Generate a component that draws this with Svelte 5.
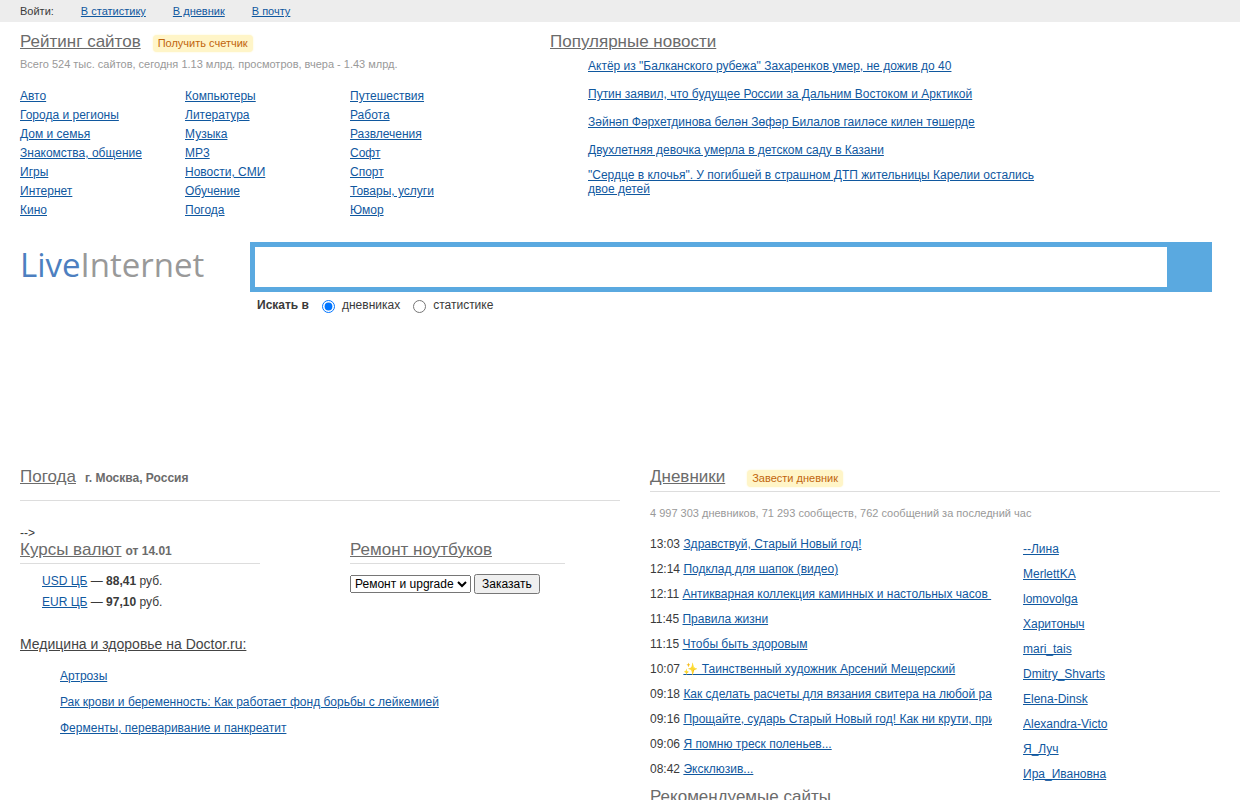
<script>
	let query = $state('');
	let area = $state('diary');

	const logins = ['В статистику', 'В дневник', 'В почту'];

	const categories = [
		['Авто', 'Города и регионы', 'Дом и семья', 'Знакомства, общение', 'Игры', 'Интернет', 'Кино'],
		['Компьютеры', 'Литература', 'Музыка', 'MP3', 'Новости, СМИ', 'Обучение', 'Погода'],
		['Путешествия', 'Работа', 'Развлечения', 'Софт', 'Спорт', 'Товары, услуги', 'Юмор']
	];

	const news = [
		'Актёр из "Балканского рубежа" Захаренков умер, не дожив до 40',
		'Путин заявил, что будущее России за Дальним Востоком и Арктикой',
		'Зәйнәп Фәрхетдинова белән Зөфәр Билалов гаиләсе килен төшерде',
		'Двухлетняя девочка умерла в детском саду в Казани',
		'"Сердце в клочья". У погибшей в страшном ДТП жительницы Карелии остались двое детей'
	];

	const rates = [
		{ name: 'USD ЦБ', value: '88,41' },
		{ name: 'EUR ЦБ', value: '97,10' }
	];

	const health = [
		'Артрозы',
		'Рак крови и беременность: Как работает фонд борьбы с лейкемией',
		'Ферменты, переваривание и панкреатит'
	];

	const posts = [
		{ time: '13:03', title: 'Здравствуй, Старый Новый год!' },
		{ time: '12:14', title: 'Подклад для шапок (видео)' },
		{ time: '12:11', title: 'Антикварная коллекция каминных и настольных часов\u00a0' },
		{ time: '11:45', title: 'Правила жизни' },
		{ time: '11:15', title: 'Чтобы быть здоровым' },
		{ time: '10:07', title: '✨ Таинственный художник Арсений Мещерский' },
		{ time: '09:18', title: 'Как сделать расчеты для вязания свитера на любой ра' },
		{ time: '09:16', title: 'Прощайте, сударь Старый Новый год! Как ни крути, при' },
		{ time: '09:06', title: 'Я помню треск поленьев...' },
		{ time: '08:42', title: 'Эксклюзив...' }
	];

	const authors = [
		'--Лина',
		'MerlettKA',
		'lomovolga',
		'Харитоныч',
		'mari_tais',
		'Dmitry_Shvarts',
		'Elena-Dinsk',
		'Alexandra-Victo',
		'Я_Луч',
		'Ира_Ивановна'
	];
</script>

<nav class="topbar">
	<span>Войти:</span>
	{#each logins as login}
		<a href="#login">{login}</a>
	{/each}
</nav>

<main>
	<div class="top">
		<section>
			<div class="heading">
				<h2><a href="#rating">Рейтинг сайтов</a></h2>
				<a class="tag" href="#counter">Получить счетчик</a>
			</div>
			<p class="stat">Всего 524 тыс. сайтов, сегодня 1.13 млрд. просмотров, вчера - 1.43 млрд.</p>
			<div class="categories">
				{#each categories as column}
					<ul>
						{#each column as item}
							<li><a href="#category">{item}</a></li>
						{/each}
					</ul>
				{/each}
			</div>
		</section>

		<section>
			<div class="heading">
				<h2><a href="#news">Популярные новости</a></h2>
			</div>
			<ul class="news">
				{#each news as item}
					<li><a href="#news">{item}</a></li>
				{/each}
			</ul>
		</section>
	</div>

	<div class="search">
		<a class="logo" href="#home"><span>Live</span>Internet</a>
		<form onsubmit={(event) => event.preventDefault()}>
			<div class="search-box">
				<input type="text" aria-label="Поиск" bind:value={query} />
				<button type="submit" aria-label="Найти"></button>
			</div>
			<div class="search-in">
				<b>Искать в</b>
				<label><input type="radio" name="area" value="diary" bind:group={area} />дневниках</label>
				<label><input type="radio" name="area" value="stat" bind:group={area} />статистике</label>
			</div>
		</form>
	</div>

	<div class="bottom">
		<div>
			<section class="weather">
				<div class="heading">
					<h2><a href="#weather">Погода</a></h2>
					<b class="note">г. Москва, Россия</b>
				</div>
			</section>

			<p class="arrow">--&gt;</p>

			<div class="pair">
				<section class="rates">
					<div class="heading ruled">
						<h2><a href="#rates">Курсы валют</a></h2>
						<b class="note">от 14.01</b>
					</div>
					<ul>
						{#each rates as rate}
							<li><a href="#rates">{rate.name}</a> — <b>{rate.value}</b> руб.</li>
						{/each}
					</ul>
				</section>

				<section class="repair">
					<div class="heading ruled">
						<h2><a href="#repair">Ремонт ноутбуков</a></h2>
					</div>
					<div class="order">
						<select aria-label="Услуга">
							<option>Ремонт и upgrade</option>
						</select>
						<button type="button">Заказать</button>
					</div>
				</section>
			</div>

			<section class="health">
				<h3><a href="#health">Медицина и здоровье на Doctor.ru:</a></h3>
				<ul>
					{#each health as item}
						<li><a href="#health">{item}</a></li>
					{/each}
				</ul>
			</section>
		</div>

		<div>
			<section class="diaries">
				<div class="heading ruled">
					<h2><a href="#diaries">Дневники</a></h2>
					<a class="tag" href="#create">Завести дневник</a>
				</div>
				<p class="stat">4 997 303 дневников, 71 293 сообществ, 762 сообщений за последний час</p>
				<div class="feed">
					<ul>
						{#each posts as post}
							<li>{post.time} <a href="#post">{post.title}</a></li>
						{/each}
					</ul>
					<ul class="authors">
						{#each authors as author}
							<li><a href="#author">{author}</a></li>
						{/each}
					</ul>
				</div>
			</section>

			<section>
				<div class="heading">
					<h2><a href="#sites">Рекомендуемые сайты</a></h2>
				</div>
			</section>
		</div>
	</div>
</main>

<style>
	:global(body) {
		background: #fff;
		color: #3a3a3a;
		font: 12px/14px 'Liberation Sans', Arial, sans-serif;
	}

	a {
		color: #10589f;
	}

	ul,
	p,
	h2,
	h3 {
		margin: 0;
		padding: 0;
		list-style: none;
	}

	.topbar {
		display: flex;
		gap: 27px;
		padding: 0 20px;
		background: #ededed;
		font-size: 11px;
		line-height: 22px;
	}

	main {
		padding: 10px 20px 20px;
	}

	.heading {
		display: flex;
		align-items: baseline;
	}

	.ruled {
		padding-bottom: 4px;
		border-bottom: 1px solid #ddd;
	}

	h2 {
		font-size: 17px;
		font-weight: normal;
		line-height: 19px;
	}

	h2 a {
		color: #6b6b6b;
	}

	.tag {
		margin-left: 12px;
		padding: 2px 5px;
		border-radius: 4px;
		background: #fff5c8;
		box-shadow: 0 0 2px #fff5c8;
		color: #c1650d;
		font-size: 11px;
		line-height: 13px;
		text-decoration: none;
	}

	.stat {
		color: #999;
		font-size: 11px;
	}

	.top {
		display: grid;
		grid-template-columns: 530px 1fr;
		min-height: 210px;
	}

	.top .stat {
		margin-top: 5px;
	}

	.categories {
		display: grid;
		grid-template-columns: repeat(3, 165px);
		margin-top: 16px;
		line-height: 19px;
	}

	.news {
		max-width: 462px;
		padding: 1px 0 0 38px;
	}

	.news li {
		display: flex;
		align-items: center;
		box-sizing: border-box;
		min-height: 28px;
		padding: 4px 0;
	}

	.search {
		display: flex;
		padding-right: 8px;
	}

	.logo {
		flex: 0 0 230px;
		color: #999;
		font: 33px/46px 'Open Sans', 'Trebuchet MS', sans-serif;
		text-decoration: none;
	}

	.logo span {
		color: #4d7fc0;
	}

	.search form {
		flex: 1;
	}

	.search-box {
		display: flex;
		height: 40px;
		border: 5px solid #5aa9e0;
		background: #5aa9e0;
	}

	.search-box input {
		flex: 1;
		padding: 0 10px;
		border: 0;
		background: #fff;
		font-size: 20px;
		outline: none;
	}

	.search-box button {
		width: 40px;
		border: 0;
		background: #5aa9e0;
		cursor: pointer;
	}

	.search-in {
		display: flex;
		gap: 13px;
		padding: 6px 7px;
	}

	.search-in label {
		display: flex;
	}

	.search-in input {
		width: 13px;
		height: 13px;
		margin: 2px 7px 0 0;
	}

	.bottom {
		display: grid;
		grid-template-columns: 20fr 19fr;
		gap: 30px;
		margin-top: 148px;
	}

	.note {
		margin-left: 9px;
		color: #6b6b6b;
		font-size: 12px;
	}

	.weather {
		padding-bottom: 14px;
		border-bottom: 1px solid #ddd;
	}

	.arrow {
		margin-top: 25px;
	}

	.pair {
		display: grid;
		grid-template-columns: 240px 215px;
		gap: 90px;
	}

	.rates .note {
		margin-left: 4px;
	}

	.rates ul {
		padding: 7px 0 0 22px;
		line-height: 21px;
	}

	.order {
		display: flex;
		align-items: center;
		gap: 3px;
		margin-top: 10px;
	}

	.order select,
	.order button {
		font: 12px 'Liberation Sans', Arial, sans-serif;
	}

	.health {
		margin-top: 21px;
	}

	h3 {
		font-size: 14px;
		font-weight: normal;
		line-height: 20px;
	}

	h3 a {
		color: #444;
	}

	.health ul {
		padding: 9px 0 0 40px;
		line-height: 26px;
	}

	.diaries .tag {
		margin-left: 22px;
	}

	.diaries .stat {
		margin-top: 14px;
	}

	.feed {
		display: grid;
		grid-template-columns: 60% 1fr;
		column-gap: 31px;
		margin-top: 12px;
		line-height: 25px;
	}

	.feed li {
		overflow: hidden;
		white-space: nowrap;
	}

	.authors {
		padding-top: 5px;
	}
</style>
